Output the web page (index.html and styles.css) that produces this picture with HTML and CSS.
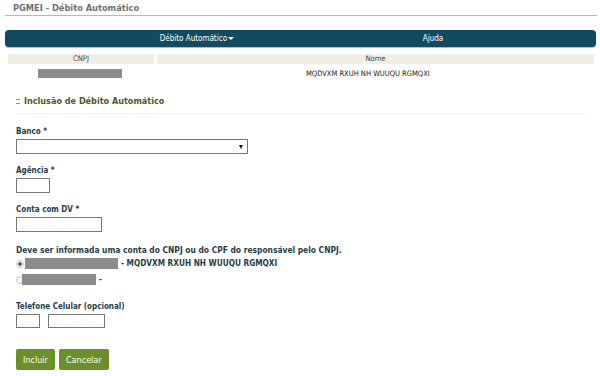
FILE: index.html
```html
<!DOCTYPE html>
<html>
	<head>
		<link rel="stylesheet" href="styles.css">
	</head>
	<body>
		<header class="page-title">PGMEI - Débito Automático</header>

		<nav class="menu">
			<span class="menu-item">Débito Automático <span class="caret"></span></span>
			<span class="menu-item">Ajuda</span>
		</nav>

		<div class="contributor">
			<div class="head">CNPJ</div>
			<div class="head">Nome</div>
			<div class="cell"><span class="masked masked-cnpj"></span></div>
			<div class="cell name">MQDVXM RXUH NH WUUQU RGMQXI</div>
		</div>

		<section class="form">
			<h2 class="form-title"><span class="toggle"></span>Inclusão de Débito Automático</h2>

			<label class="label">Banco *</label>
			<div class="select"><span class="arrow"></span></div>

			<label class="label">Agência *</label>
			<input class="field field-agencia" type="text">

			<label class="label">Conta com DV *</label>
			<input class="field field-conta" type="text">

			<p class="label notice">Deve ser informada uma conta do CNPJ ou do CPF do responsável pelo CNPJ.</p>
			<div class="radio-row">
				<span class="radio checked"></span>
				<span class="masked masked-cnpj2"></span>
				<span class="radio-text">- MQDVXM RXUH NH WUUQU RGMQXI</span>
			</div>
			<div class="radio-row">
				<span class="radio"></span>
				<span class="masked masked-cpf"></span>
				<span class="radio-text">-</span>
			</div>

			<label class="label phone-label">Telefone Celular (opcional)</label>
			<div class="phone">
				<input class="field field-ddd" type="text">
				<input class="field field-fone" type="text">
			</div>

			<div class="buttons">
				<button class="btn">Incluir</button>
				<button class="btn">Cancelar</button>
			</div>
		</section>
	</body>
</html>
```

FILE: styles.css
```css
body {
	margin: 0;
	padding: 0;
	background-color: #fff;
	font-family: "DejaVu Sans Condensed", "DejaVu Sans", sans-serif;
	font-size: 8px;
	color: #333;
}

.page-title {
	margin: 0 3px 0 5px;
	padding: 3px 8px 3px 8px;
	height: 9px;
	line-height: 9px;
	font-size: 9.2px;
	font-weight: bold;
	color: #707070;
	border-bottom: 1px solid #b8b8b8;
}

.menu {
	display: flex;
	margin: 14px 4px 0 5px;
	height: 17px;
	line-height: 17px;
	border-radius: 4px;
	background-color: #124b5f;
	box-shadow: 0 1px 1px rgba(0, 0, 0, 0.3);
}
.menu-item {
	color: #fff;
	font-size: 8px;
	text-align: center;
}
.menu-item:nth-of-type(1) {
	width: 236px;
	margin-left: 74px;
}
.menu-item:nth-of-type(2) {
	width: 236px;
}
.caret {
	display: inline-block;
	width: 0;
	height: 0;
	margin-left: -1px;
	vertical-align: 1px;
	border-left: 3px solid transparent;
	border-right: 3px solid transparent;
	border-top: 3px solid #fff;
}

.contributor {
	display: grid;
	grid-template-columns: 146px 1fr;
	column-gap: 3px;
	row-gap: 4px;
	margin: 7px 6px 0 8px;
	text-align: center;
}
.contributor .head {
	height: 10px;
	line-height: 10px;
	font-size: 7.6px;
	color: #444;
	background-color: #f1eee5;
}
.contributor .cell {
	height: 12px;
	line-height: 12px;
}
.contributor .name {
	font-size: 7.5px;
	color: #222;
	text-align: left;
	padding-left: 149px;
}

.masked {
	display: inline-block;
	background-color: #8c8c8c;
}
.masked-cnpj {
	width: 84px;
	height: 9px;
	margin-left: -2px;
	vertical-align: -2px;
}

.form {
	padding: 0 15px 0 16px;
}
.form-title {
	margin: 16px 0 0 0;
	padding-bottom: 7px;
	font-size: 9px;
	font-weight: bold;
	color: #4b5a28;
	border-bottom: 1px solid #f0f0f0;
}
.toggle {
	display: inline-block;
	width: 4px;
	height: 3px;
	margin-right: 4px;
	border-top: 1px solid #8a9a6a;
	border-bottom: 1px solid #8a9a6a;
	vertical-align: 0;
}

.label {
	display: block;
	margin: 12px 0 3px 0;
	font-size: 8px;
	font-weight: bold;
	color: #1f3d4c;
}
.form-title + .label {
	margin-top: 13px;
}

.select {
	position: relative;
	width: 230px;
	height: 13px;
	border: 1px solid #777;
	background-color: #fff;
}
.arrow {
	position: absolute;
	right: 4px;
	top: 5px;
	width: 0;
	height: 0;
	border-left: 2px solid transparent;
	border-right: 2px solid transparent;
	border-top: 4px solid #111;
}

.field {
	display: block;
	box-sizing: border-box;
	margin: 0;
	padding: 0;
	height: 15px;
	border: 1px solid #777;
	background-color: #fff;
}
.field-agencia {
	width: 34px;
}
.field-conta {
	width: 86px;
}

.notice {
	margin-top: 13px;
	margin-bottom: 3px;
	font-size: 8.4px;
}

.radio-row {
	display: flex;
	align-items: center;
	height: 11px;
	line-height: 11px;
	margin-bottom: 5px;
}
.radio {
	display: inline-block;
	box-sizing: border-box;
	width: 8px;
	height: 8px;
	border-radius: 50%;
	border: 1px solid #c8c8c8;
	background-color: #f4f4f4;
}
.radio.checked {
	background: radial-gradient(circle, #555 0, #555 1.5px, #f4f4f4 2px);
}
.masked-cnpj2 {
	width: 93px;
	height: 11px;
	margin-left: 1px;
}
.masked-cpf {
	width: 74px;
	height: 11px;
	margin-left: -2px;
}
.radio-text {
	margin-left: 3px;
	font-size: 8.2px;
	font-weight: bold;
	color: #1f3d4c;
}

.phone-label {
	margin-top: 17px;
}
.phone {
	display: flex;
	gap: 8px;
}
.field-ddd {
	width: 24px;
	height: 14px;
}
.field-fone {
	width: 57px;
	height: 14px;
}

.buttons {
	display: flex;
	gap: 4px;
	margin-top: 21px;
}
.btn {
	height: 21px;
	padding: 0 7px;
	font-family: "DejaVu Sans Condensed", "DejaVu Sans", sans-serif;
	font-size: 9px;
	color: #fff;
	background-color: #6a8f2b;
	border: none;
	border-radius: 2px;
}
```
